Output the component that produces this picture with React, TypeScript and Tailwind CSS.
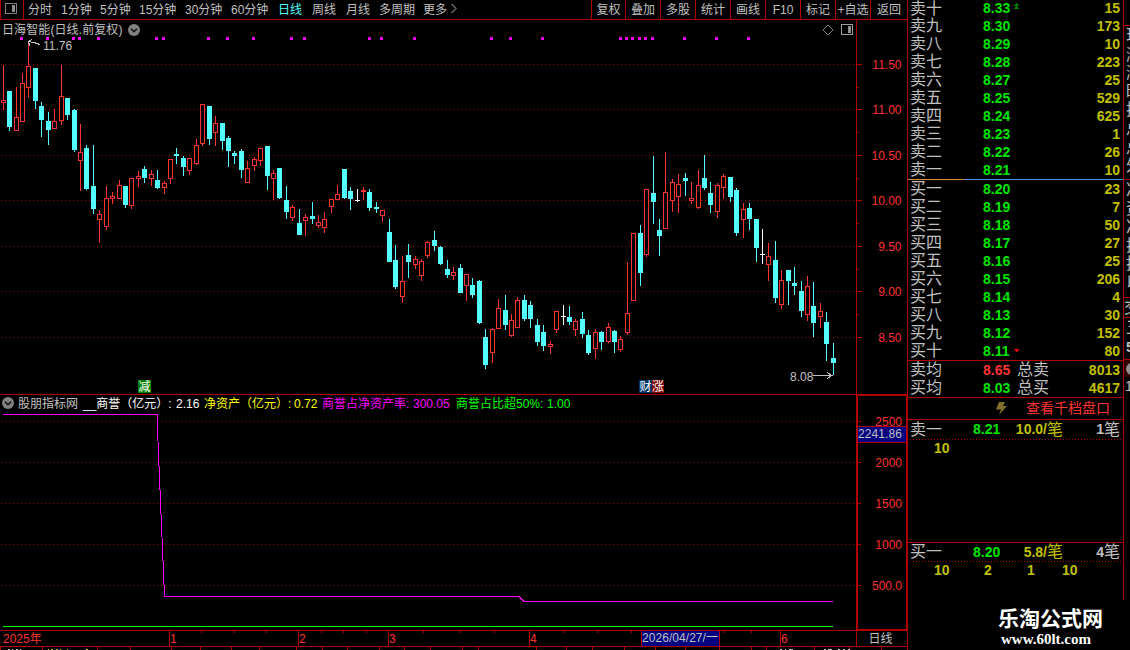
import React from "react";

type Kind = "r" | "c" | "w";
// [kind, high, bodyTop, bodyBottom, low] in chart pixels
type Candle = [Kind, number, number, number, number];

const candles: Candle[] = [
  ["r", 65, 100, 103, 110], ["c", 91, 91, 127, 131], ["r", 87, 117, 131, 131], ["r", 73, 83, 122, 122],
  ["r", 43, 66, 88, 98], ["c", 68, 68, 101, 109], ["c", 102, 106, 120, 137], ["c", 112, 121, 130, 145],
  ["r", 109, 121, 129, 129], ["r", 65, 96, 121, 125], ["c", 98, 98, 115, 120], ["c", 109, 110, 150, 152],
  ["r", 124, 152, 161, 191], ["c", 145, 148, 189, 190], ["c", 145, 186, 209, 214], ["r", 210, 214, 220, 243],
  ["r", 186, 198, 227, 230], ["r", 192, 196, 199, 204], ["r", 180, 185, 199, 199], ["c", 186, 186, 205, 208],
  ["r", 178, 178, 206, 209], ["r", 171, 176, 179, 187], ["c", 166, 169, 178, 183], ["r", 170, 174, 179, 186],
  ["c", 170, 180, 188, 189], ["r", 181, 183, 188, 194], ["r", 159, 159, 179, 184], ["c", 148, 154, 156, 164],
  ["c", 156, 158, 167, 176], ["r", 158, 158, 171, 175], ["r", 139, 145, 164, 165], ["r", 104, 104, 144, 146],
  ["c", 106, 106, 139, 145], ["r", 116, 123, 133, 146], ["c", 123, 123, 141, 150], ["c", 136, 138, 151, 167],
  ["c", 151, 153, 156, 164], ["c", 149, 151, 170, 178], ["r", 161, 168, 183, 183], ["r", 157, 159, 166, 171],
  ["r", 148, 148, 161, 166], ["c", 146, 146, 176, 190], ["r", 170, 173, 179, 200], ["c", 168, 168, 198, 199],
  ["c", 186, 200, 212, 219], ["r", 205, 207, 218, 221], ["c", 209, 223, 235, 235], ["r", 214, 217, 221, 236],
  ["c", 202, 216, 219, 224], ["r", 215, 222, 226, 228], ["r", 212, 219, 228, 233], ["r", 199, 199, 207, 213],
  ["r", 185, 194, 200, 200], ["c", 169, 169, 198, 199], ["c", 187, 191, 199, 210], ["w", 189, 200, 201, 202],
  ["r", 187, 190, 192, 200], ["c", 189, 192, 208, 211], ["c", 202, 207, 209, 213], ["r", 210, 210, 216, 222],
  ["c", 219, 232, 262, 262], ["c", 245, 260, 287, 289], ["r", 256, 281, 297, 303], ["c", 244, 255, 262, 278],
  ["r", 256, 259, 265, 269], ["r", 259, 261, 276, 281], ["r", 241, 242, 256, 258], ["c", 231, 240, 246, 251],
  ["c", 246, 247, 264, 265], ["c", 260, 269, 275, 278], ["r", 267, 272, 276, 280], ["c", 264, 268, 293, 293],
  ["r", 274, 274, 286, 301], ["c", 278, 285, 295, 298], ["c", 280, 281, 323, 324], ["c", 329, 337, 365, 369],
  ["r", 328, 329, 353, 363], ["r", 299, 308, 329, 329], ["c", 295, 310, 325, 330], ["r", 314, 320, 336, 337],
  ["r", 297, 300, 328, 328], ["c", 295, 300, 319, 321], ["c", 301, 305, 319, 328], ["c", 319, 325, 342, 346],
  ["c", 325, 332, 346, 351], ["r", 341, 344, 347, 354], ["r", 311, 311, 330, 333], ["w", 305, 316, 317, 325],
  ["c", 306, 317, 322, 325], ["r", 319, 321, 330, 336], ["c", 312, 319, 334, 338], ["c", 330, 335, 353, 355],
  ["r", 329, 332, 349, 359], ["c", 331, 332, 342, 350], ["r", 323, 327, 342, 343], ["c", 330, 331, 342, 353],
  ["r", 336, 339, 350, 352], ["r", 262, 313, 333, 335], ["r", 233, 233, 301, 301], ["c", 225, 233, 273, 286],
  ["r", 189, 189, 255, 257], ["c", 156, 193, 202, 224], ["c", 219, 230, 236, 256], ["r", 152, 192, 229, 229],
  ["r", 179, 182, 201, 212], ["r", 174, 184, 197, 213], ["c", 173, 178, 181, 196], ["r", 182, 198, 201, 204],
  ["r", 170, 185, 208, 209], ["c", 155, 178, 188, 190], ["c", 182, 193, 205, 213], ["r", 183, 185, 212, 218],
  ["r", 174, 176, 188, 199], ["c", 177, 177, 197, 202], ["c", 188, 190, 233, 236], ["r", 203, 209, 220, 238],
  ["c", 203, 208, 219, 230], ["c", 219, 219, 248, 262], ["w", 229, 254, 255, 264], ["r", 243, 256, 265, 281],
  ["c", 241, 260, 298, 303], ["r", 270, 280, 305, 309], ["c", 270, 270, 281, 305], ["c", 267, 283, 286, 295],
  ["c", 281, 291, 311, 317], ["r", 276, 286, 315, 321], ["c", 282, 306, 323, 337], ["r", 303, 311, 317, 328],
  ["c", 312, 322, 344, 361], ["c", 343, 358, 363, 375],
];

const COLORS: Record<Kind, string> = { r: "#ff3232", c: "#54ffff", w: "#ffffff" };
const RED = "#b00000";

const signals = [20, 46, 72, 78, 97, 155, 162, 207, 226, 252, 290, 303, 368, 380, 413, 490, 509, 541, 619, 625, 631, 638, 644, 651, 683, 715, 747];
const priceAxis: [number, string][] = [[64, "11.50"], [109, "11.00"], [155, "10.50"], [200, "10.00"], [246, "9.50"], [291, "9.00"], [337, "8.50"]];
const priceMinor = [87, 132, 178, 223, 269, 314];
const subAxis: [number, string][] = [[421, "2500"], [462, "2000"], [503, "1500"], [544, "1000"], [585, "500.0"]];
const timeMajor = [169, 298, 388, 529, 780];
const timeMinor = [201, 234, 266, 321, 343, 366, 423, 459, 494, 563, 597, 631, 723, 751];
const timeLabels: [number, string][] = [[3, "2025年"], [170, "1"], [299, "2"], [389, "3"], [530, "4"], [781, "6"]];
const stripTicks = [0, 42, 97, 130, 171, 200, 231, 259, 296, 322, 347, 379, 404, 430, 462, 478, 536, 566, 592, 624, 655, 685, 719, 751, 766, 814, 849, 881];

function CandleShape({ c, i }: { c: Candle; i: number }) {
  const [kind, high, top, bottom, low] = c;
  const x = Math.floor(3.25 + i * 6.434);
  const color = COLORS[kind];
  if (kind === "r" && bottom - top > 2) {
    return (
      <g fill={color}>
        {top > high && <rect x={x} y={high} width={1} height={top - high} />}
        {low > bottom && <rect x={x} y={bottom} width={1} height={low - bottom} />}
        <rect x={x - 2} y={top} width={5} height={bottom - top} />
        <rect x={x - 1} y={top + 1} width={3} height={bottom - top - 2} fill="#000" />
      </g>
    );
  }
  return (
    <g fill={color}>
      <rect x={x} y={high} width={1} height={low - high} />
      <rect x={x - 2} y={top} width={5} height={bottom - top} />
    </g>
  );
}

function GridLine({ y }: { y: number }) {
  return <line x1={1} x2={856} y1={y + 0.5} y2={y + 0.5} stroke="#a00000" strokeDasharray="1 3" />;
}

function PanelIcon({ bright = false }: { bright?: boolean }) {
  return (
    <svg width="13" height="12" viewBox="0 0 13 12" shapeRendering="crispEdges">
      <rect x="0.5" y="0.5" width="11" height="10" rx="1" fill="none" stroke={bright ? "#a0a0a0" : "#808080"} />
      <rect x="7" y="2" width="3" height="7" fill="#909090" />
    </svg>
  );
}

function ChevronBadge() {
  return (
    <svg width="12" height="12" viewBox="0 0 12 12">
      <circle cx="6" cy="6" r="6" fill="#808080" />
      <path d="M3 4.7 6 7.7 9 4.7" fill="none" stroke="#101010" strokeWidth="1.5" />
    </svg>
  );
}

const periods: [string, string][] = [
  ["分时", "w-[33px]"], ["1分钟", "w-[39px]"], ["5分钟", "w-[39px]"], ["15分钟", "w-[46px]"], ["30分钟", "w-[46px]"],
  ["60分钟", "w-[47px]"], ["日线", "w-[34px]"], ["周线", "w-[34px]"], ["月线", "w-[33px]"], ["多周期", "w-[44px]"], ["更多", "w-[27px]"],
];
const tools: [string, string][] = [
  ["复权", "w-[34px]"], ["叠加", "w-[35px]"], ["多股", "w-[35px]"], ["统计", "w-[35px]"], ["画线", "w-[35px]"],
  ["F10", "w-[35px]"], ["标记", "w-[35px]"], ["+自选", "w-[35px]"], ["返回", "w-[37px]"],
];

function Toolbar() {
  return (
    <div className="flex h-5 w-[908px] border-r border-b border-l border-[#b00000] text-[12px] leading-[20px]">
      <div className="flex w-[23px] items-start border-r border-[#b00000] pt-[3px] pl-1">
        <PanelIcon />
      </div>
      <div className="flex flex-1 pl-1">
        {periods.map(([label, w]) => (
          <span key={label} className={`${w} h-[19px] shrink-0 ${label === "日线" ? "text-[#54ffff]" : ""}`}>{label}</span>
        ))}
        <svg width="8" height="12" viewBox="0 0 8 12" className="mt-[3px]">
          <path d="M1.5 1 6 5.5 1.5 10" fill="none" stroke="#c0c0c0" />
        </svg>
      </div>
      <div className="flex">
        {tools.map(([label, w]) => (
          <span key={label} className={`${w} h-[19px] shrink-0 border-l border-[#b00000] text-center whitespace-nowrap`}>{label}</span>
        ))}
      </div>
    </div>
  );
}

function Chart() {
  return (
    <svg width="908" height="630" viewBox="0 20 908 630" shapeRendering="crispEdges" className="block">
      <g>
        {priceAxis.map(([y, label]) => (
          <g key={y}>
            <GridLine y={y} />
            <rect x="857" y={y} width="5" height="1" fill={RED} />
            <text x="901.5" y={y + 5} textAnchor="end" fill="#ff3232">{label}</text>
          </g>
        ))}
        {priceMinor.map((y) => <rect key={y} x="857" y={y} width="2" height="1" fill={RED} />)}
        {subAxis.map(([y, label]) => (
          <g key={y}>
            <GridLine y={y} />
            <rect x="858" y={y} width="3" height="1" fill={RED} />
            <text x="902" y={y + 5} textAnchor="end" fill="#ff3232">{label}</text>
          </g>
        ))}
      </g>
      {signals.map((x) => <rect key={x} x={x} y="37" width="3" height="3" fill="#ff00ff" />)}
      {candles.map((c, i) => <CandleShape key={i} c={c} i={i} />)}
      <path d="M40 44.5 37 43.5 34 42.5 28 41.5M28 41.5 32 39.5M28 41.5 30 45.5" fill="none" stroke="#c0c0c0" />
      <text x="43" y="50" fill="#c0c0c0">11.76</text>
      <text x="790" y="381" fill="#c0c0c0">8.08</text>
      <path d="M813 375.5H832M827 372.5 832 375.5 827 378.5" fill="none" stroke="#c0c0c0" />

      <path d="M157.5 414V428L158.5 454 164.5 596.5" fill="none" stroke="#ff00ff" />
      <path d="M3 414.5H157M164 596.5H519L524 601.5H833" fill="none" stroke="#ff00ff" />
      <path d="M3 626.5H833" stroke="#00ff00" />

      <g fill={RED}>
        <rect x="856" y="20" width="1" height="626" />
        <rect x="907" y="20" width="1" height="630" />
        <rect x="0" y="394" width="907" height="1" />
        <rect x="856" y="394" width="2" height="237" />
        <rect x="906" y="394" width="2" height="237" />
        <rect x="856" y="394" width="51" height="2" />
        <rect x="856" y="629" width="51" height="2" />
        <rect x="0" y="630" width="907" height="1" />
        <rect x="0" y="646" width="908" height="1" />
        <rect x="858" y="426" width="48" height="17" />
        {timeMajor.map((x) => <rect key={x} x={x} y="630" width="1" height="16" />)}
        {timeMinor.map((x) => <rect key={x} x={x} y="630" width="1" height="3" />)}
        {stripTicks.map((x) => <rect key={x} x={x} y="646" width="1" height="4" />)}
        <rect x="641" y="631" width="1" height="15" />
        <rect x="719" y="631" width="1" height="15" />
      </g>
      <rect x="858" y="427" width="48" height="15" fill="#000080" />
      <text x="858" y="438" fill="#c0c0c0" textLength="44">2241.86</text>
      <rect x="642" y="631" width="77" height="15" fill="#000080" />
      <text x="642" y="642" fill="#c0c0c0" textLength="76">2026/04/27/一</text>
      {timeLabels.map(([x, label]) => <text key={x} x={x} y="643" fill="#ff3232">{label}</text>)}
      <text x="868.5" y="643" fill="#c0c0c0">日线</text>
      <path d="M8 649.5h2m2 0h1m3 0h2m2 0h1M780 649.5h2m3 0h1m3 0h4M824 649.5h2m2 0h4m6 0h2m3 0h2m3 0h2" stroke="#c0c0c0" />
      <path d="M48 649.5h1m2 0h2m3 0h2m2 0h1m6 0h1m18 0h2" stroke="#c0c000" />
    </svg>
  );
}

function TitleRow() {
  return (
    <div className="absolute top-[21px] left-[2px] flex w-[852px] items-center justify-between text-[12px] leading-[16px]">
      <div className="flex items-center">
        <span className="w-[126px] pt-px tracking-[0.1px] whitespace-nowrap">日海智能(日线.前复权)</span>
        <ChevronBadge />
      </div>
      <div className="flex items-center gap-[7px]">
        <svg width="12" height="12" viewBox="0 0 12 12">
          <path d="M6 1 11 6 6 11 1 6Z" fill="none" stroke="#808080" />
        </svg>
        <PanelIcon bright />
      </div>
    </div>
  );
}

function IndicatorRow() {
  return (
    <div className="absolute top-[396px] left-[2px] flex items-center text-[12px] leading-[16px] whitespace-nowrap">
      <span className="-mt-[2px] w-[16px]"><ChevronBadge /></span>
      <span className="w-[65px]">股朋指标网</span>
      <span className="w-[93px] text-white">__商誉（亿元）:</span>
      <span className="w-[28px] text-white">2.16</span>
      <span className="w-[90px] text-[#ffff00]">净资产（亿元）:</span>
      <span className="w-[28px] text-[#ffff00]">0.72</span>
      <span className="w-[91px] text-[#ff00ff]">商誉占净资产率:</span>
      <span className="w-[43px] text-[#ff00ff]">300.05</span>
      <span className="w-[91px] text-[#00ff00]">商誉占比超50%:</span>
      <span className="text-[#00ff00]">1.00</span>
    </div>
  );
}

const nums = ["一", "二", "三", "四", "五", "六", "七", "八", "九", "十"];
const sells: [string, string][] = [["8.33", "15"], ["8.30", "173"], ["8.29", "10"], ["8.28", "223"], ["8.27", "25"], ["8.25", "529"], ["8.24", "625"], ["8.23", "1"], ["8.22", "26"], ["8.21", "10"]];
const buys: [string, string][] = [["8.20", "23"], ["8.19", "7"], ["8.18", "50"], ["8.17", "27"], ["8.16", "25"], ["8.15", "206"], ["8.14", "4"], ["8.13", "30"], ["8.12", "152"], ["8.11", "80"]];

function BookRow({ label, price, vol, mark, short, red, extra }: { label: string; price: string; vol: string; mark?: "up" | "down"; short?: boolean; red?: boolean; extra?: string }) {
  return (
    <div className={`flex items-center pr-[3px] pl-[2px] ${short ? "h-[17px]" : "h-[18px]"}`}>
      <span className={`w-[73px] text-[16px] ${short ? "leading-[18px]" : "leading-[20px]"}`}>{label}</span>
      <span className={`w-[31px] text-[14px] font-bold ${red ? "text-[#ff3232]" : "text-[#00e600]"}`}>{price}</span>
      {mark === "up" && (
        <svg width="6" height="8" viewBox="0 0 6 8" className="-mt-1" shapeRendering="crispEdges">
          <path d="M2 0h1v1H2ZM1 1h3v1H1ZM0 2h5v1H0ZM2 3h1v1H2ZM1 4h3v1H1ZM0 5h5v1H0Z" fill="#008000" />
        </svg>
      )}
      {mark === "down" && (
        <svg width="6" height="4" viewBox="0 0 6 4"><path d="M0 0H5.4L2.7 3.4Z" fill="#ff0000" /></svg>
      )}
      {extra && <span className="ml-[3px] text-[16px] leading-[20px]">{extra}</span>}
      <span className="ml-auto text-[14px] font-bold text-[#c0c000]">{vol}</span>
    </div>
  );
}

function QueueHead({ label, price, avg, count, h }: { label: string; price: string; avg: string; count: string; h: string }) {
  return (
    <div className={`flex items-center pr-[3px] pl-[2px] ${h}`}>
      <span className="w-[63px] text-[16px] leading-[18px]">{label}</span>
      <span className="w-[30px] text-[14px] font-bold text-[#00e600]">{price}</span>
      <span className="flex w-[60px] items-center justify-end text-[#c0c000]">
        <b className="text-[14px]">{avg}/</b>
        <span className="text-[16px] leading-[18px]">笔</span>
      </span>
      <span className="ml-auto flex items-center">
        <b className="text-[14px]">{count}</b>
        <span className="text-[16px] leading-[18px]">笔</span>
      </span>
    </div>
  );
}

function DottedRule() {
  return (
    <svg width="215" height="1" className="block shrink-0" shapeRendering="crispEdges"><path d="M2 .5H213" stroke="#b00000" strokeDasharray="1 2" /></svg>
  );
}

function OrderBook() {
  return (
    <div className="flex w-[216px] flex-col">
      <div className="flex h-[600px] flex-col border-r border-[#b00000]">
        {sells.map(([p, v], i) => (
          <BookRow key={p} label={"卖" + nums[9 - i]} price={p} vol={v} short={i === 0} mark={i === 0 ? "up" : undefined} />
        ))}
        <div className="flex h-px shrink-0"><div className="w-[57px] bg-[#d09040]" /><div className="flex-1 bg-[#5090d8]" /></div>
        {buys.map(([p, v], i) => (
          <BookRow key={p} label={"买" + nums[i]} price={p} vol={v} mark={i === 9 ? "down" : undefined} />
        ))}
        <div className="border-y border-[#b00000]">
          <BookRow label="卖均" price="8.65" vol="8013" red extra="总卖" />
          <BookRow label="买均" price="8.03" vol="4617" extra="总买" />
        </div>
        <div className="flex h-[22px] items-center border-b border-[#b00000] pl-[88px]">
          <svg width="12" height="14" viewBox="0 0 12 14"><path d="M3 0H9L7 4H11L3 13 5 7.5H0Z" fill="#80702c" /></svg>
          <span className="ml-[18px] text-[14px] text-[#ff3232]">查看千档盘口</span>
        </div>
        <QueueHead label="卖一" price="8.21" avg="10.0" count="1" h="h-[19px]" />
        <DottedRule />
        <div className="h-[102px] pl-[26px] text-[14px] leading-[17px] font-bold text-[#c0c000]">10</div>
        <div className="border-t border-[#b00000]" />
        <QueueHead label="买一" price="8.20" avg="5.8" count="4" h="h-[18px]" />
        <DottedRule />
        <div className="flex pl-[26px] text-[14px] leading-[17px] font-bold text-[#c0c000]">
          <span className="w-[50px]">10</span><span className="w-[43px]">2</span><span className="w-[35px]">1</span><span>10</span>
        </div>
      </div>
      <div className="flex flex-col pl-[90px] whitespace-nowrap text-white">
        <span className="pt-[6px] text-[21px] leading-[26px] font-bold">乐淘公式网</span>
        <span className="pl-[3px] font-['Liberation_Serif',serif] text-[15px] leading-[14px] font-bold">www.60lt.com</span>
      </div>
    </div>
  );
}

function EdgeStrip() {
  const cell = "h-[18.6px] shrink-0 pl-[2px]";
  return (
    <div className="flex h-[600px] w-[6px] flex-col overflow-hidden text-[16px] leading-[19px]">
      <div className="h-[26px] shrink-0 border-b border-[#b00000]" />
      <div className="flex h-[154px] shrink-0 flex-col overflow-hidden border-b border-[#b00000]">
        {["现", "涨", "涨", "昨", "换", "总", "总", "外"].map((t, i) => <span key={i} className={cell}>{t}</span>)}
      </div>
      <div className="flex h-[118px] shrink-0 flex-col overflow-hidden border-b border-[#b00000]">
        {["净", "资", "净", "换", "换", "以"].map((t, i) => <span key={i} className={cell}>{t}</span>)}
      </div>
      <div className="h-[20px] shrink-0 border-b border-[#b00000]">交</div>
      <div className="h-[42px] shrink-0 border-b border-[#b00000] pl-[2px]">
        <div>五</div>
        <b className="text-[14px]">5</b>
      </div>
      <div className="h-[17px] shrink-0 bg-[#300000]">
        <svg width="6" height="17"><circle cx="8" cy="9" r="6" fill="#909090" /></svg>
      </div>
      <div className="pl-[1px] text-[14px]">1</div>
    </div>
  );
}

export default function App() {
  return (
    <div className="flex h-[650px] w-[1130px] overflow-hidden bg-black font-['Liberation_Sans','Noto_Sans_CJK_SC',sans-serif] text-[12px] text-[#c0c0c0]">
      <div className="relative w-[908px] shrink-0">
        <Toolbar />
        <Chart />
        <TitleRow />
        <IndicatorRow />
        <span className="absolute top-[380px] left-[138px] h-[13px] w-[13px] bg-[#008000] text-center leading-[14px] text-white">减</span>
        <span className="absolute top-[380px] left-[639px] flex h-[13px] text-center leading-[14px] text-white">
          <span className="h-[13px] w-[13px] bg-[#003366]">财</span>
          <span className="h-[13px] w-[12px] rounded-tr-sm bg-[#800000]">涨</span>
        </span>
      </div>
      <OrderBook />
      <EdgeStrip />
    </div>
  );
}
